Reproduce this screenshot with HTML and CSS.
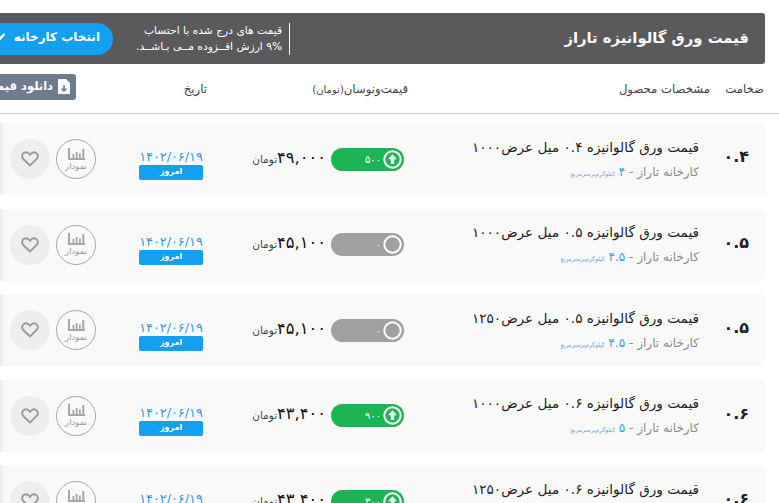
FILE: index.html
```html
<!DOCTYPE html>
<html lang="fa" dir="rtl">
<head>
  <meta charset="UTF-8">
  <title>قیمت ورق گالوانیزه تاراز</title>
  <link rel="stylesheet" href="styles.css">
</head>
<body>
<svg class="sprite">
  <symbol id="i-up" viewBox="0 0 19 19"><circle cx="9.500" cy="9.500" r="8.200" fill="none" stroke="#fff" stroke-width="2"/><path d="M9.500 4.300L14 9.300h-2.800v4.700H7.800V9.300H5z" fill="#fff"/></symbol>
  <symbol id="i-flat" viewBox="0 0 19 19"><circle cx="9.500" cy="9.500" r="8.200" fill="none" stroke="#fff" stroke-width="2"/></symbol>
  <symbol id="i-chart" viewBox="0 0 17 12"><path d="M1 0v11h16" fill="none" stroke="#a8a8a8" stroke-width="2"/><path d="M4.500 6h1.800v4H4.500zM7.800 4h1.800v6H7.800zM11 5.500h1.800V10H11zM14.300 1h2v9h-2z" fill="#a8a8a8"/></symbol>
  <symbol id="i-heart" viewBox="0 0 18 16"><path d="M9 14.500L2.500 8.200C.5 6.200.8 3.300 2.800 2c1.900-1.200 4.400-.6 6.200 1.800C10.800 1.400 13.300.8 15.200 2c2 1.300 2.300 4.200.3 6.200z" fill="none" stroke="#9a9a9a" stroke-width="1.900"/></symbol>
</svg>
<main class="page">
  <header class="top-bar">
    <h1 class="top-title">قیمت ورق گالوانیزه تاراز</h1>
    <div class="top-side">
      <p class="top-note">قیمت های درج شده با احتساب<br>۹% ارزش افــزوده مــی بـاشــد.</p>
      <button class="pick-btn">انتخاب کارخانه
        <svg width="13" height="11" viewBox="0 0 13 11"><path d="M1.500 5.500l3.500 3.500 6.500-7" fill="none" stroke="#fff" stroke-width="2.400"/></svg>
      </button>
    </div>
  </header>

  <div class="table-head">
    <span class="th-thick">ضخامت</span>
    <span class="th-product">مشخصات محصول</span>
    <span class="th-price">قیمت‌ونوسان<small>(تومان)</small></span>
    <span class="th-date">تاریخ</span>
    <button class="dl-btn">
      <svg width="12" height="15" viewBox="0 0 12 15"><path d="M0 0h8l4 4v11H0z" fill="#fff"/><path d="M6 6v6M3.500 9.500L6 12l2.500-2.500" fill="none" stroke="#6f7c8f" stroke-width="1.500"/></svg>
      دانلود قیمت ها
    </button>
  </div>

  <section class="row">
    <div class="c-thick">۰.۴</div>
    <div class="c-product">
      <div class="p-name">قیمت ورق گالوانیزه ۰.۴ میل عرض۱۰۰۰</div>
      <div class="p-sub">کارخانه تاراز - <b>۴</b> <small class="violet">کیلوگرم‌برمترمربع</small></div>
    </div>
    <div class="c-price">
      <div class="pill up"><svg width="19" height="19"><use href="#i-up"/></svg>۵۰۰</div>
      <div class="amount">۴۹,۰۰۰<small>تومان</small></div>
    </div>
    <div class="c-date"><span>۱۴۰۲/۰۶/۱۹</span><em>امروز</em></div>
    <div class="c-actions">
      <div class="chart"><svg width="17" height="12"><use href="#i-chart"/></svg><span>نمودار</span></div>
      <div class="fav"><svg width="18" height="16"><use href="#i-heart"/></svg></div>
    </div>
  </section>

  <section class="row">
    <div class="c-thick">۰.۵</div>
    <div class="c-product">
      <div class="p-name">قیمت ورق گالوانیزه ۰.۵ میل عرض۱۰۰۰</div>
      <div class="p-sub">کارخانه تاراز - <b>۴.۵</b> <small>کیلوگرم‌برمترمربع</small></div>
    </div>
    <div class="c-price">
      <div class="pill flat"><svg width="19" height="19"><use href="#i-flat"/></svg>۰</div>
      <div class="amount">۴۵,۱۰۰<small>تومان</small></div>
    </div>
    <div class="c-date"><span>۱۴۰۲/۰۶/۱۹</span><em>امروز</em></div>
    <div class="c-actions">
      <div class="chart"><svg width="17" height="12"><use href="#i-chart"/></svg><span>نمودار</span></div>
      <div class="fav"><svg width="18" height="16"><use href="#i-heart"/></svg></div>
    </div>
  </section>

  <section class="row">
    <div class="c-thick">۰.۵</div>
    <div class="c-product">
      <div class="p-name">قیمت ورق گالوانیزه ۰.۵ میل عرض۱۲۵۰</div>
      <div class="p-sub">کارخانه تاراز - <b>۴.۵</b> <small>کیلوگرم‌برمترمربع</small></div>
    </div>
    <div class="c-price">
      <div class="pill flat"><svg width="19" height="19"><use href="#i-flat"/></svg>۰</div>
      <div class="amount">۴۵,۱۰۰<small>تومان</small></div>
    </div>
    <div class="c-date"><span>۱۴۰۲/۰۶/۱۹</span><em>امروز</em></div>
    <div class="c-actions">
      <div class="chart"><svg width="17" height="12"><use href="#i-chart"/></svg><span>نمودار</span></div>
      <div class="fav"><svg width="18" height="16"><use href="#i-heart"/></svg></div>
    </div>
  </section>

  <section class="row">
    <div class="c-thick">۰.۶</div>
    <div class="c-product">
      <div class="p-name">قیمت ورق گالوانیزه ۰.۶ میل عرض۱۰۰۰</div>
      <div class="p-sub">کارخانه تاراز - <b>۵</b> <small>کیلوگرم‌برمترمربع</small></div>
    </div>
    <div class="c-price">
      <div class="pill up"><svg width="19" height="19"><use href="#i-up"/></svg>۹۰۰</div>
      <div class="amount">۴۳,۴۰۰<small>تومان</small></div>
    </div>
    <div class="c-date"><span>۱۴۰۲/۰۶/۱۹</span><em>امروز</em></div>
    <div class="c-actions">
      <div class="chart"><svg width="17" height="12"><use href="#i-chart"/></svg><span>نمودار</span></div>
      <div class="fav"><svg width="18" height="16"><use href="#i-heart"/></svg></div>
    </div>
  </section>

  <section class="row">
    <div class="c-thick">۰.۶</div>
    <div class="c-product">
      <div class="p-name">قیمت ورق گالوانیزه ۰.۶ میل عرض۱۲۵۰</div>
      <div class="p-sub">کارخانه تاراز - <b>۵</b> <small>کیلوگرم‌برمترمربع</small></div>
    </div>
    <div class="c-price">
      <div class="pill up"><svg width="19" height="19"><use href="#i-up"/></svg>۳۰۰</div>
      <div class="amount">۴۳,۴۰۰<small>تومان</small></div>
    </div>
    <div class="c-date"><span>۱۴۰۲/۰۶/۱۹</span><em>امروز</em></div>
    <div class="c-actions">
      <div class="chart"><svg width="17" height="12"><use href="#i-chart"/></svg><span>نمودار</span></div>
      <div class="fav"><svg width="18" height="16"><use href="#i-heart"/></svg></div>
    </div>
  </section>
</main>
</body>
</html>
```

FILE: styles.css
```css
html, body {
  margin: 0;
  height: 503px;
  overflow: hidden;
  background: #fff;
}
body {
  font-family: "DejaVu Sans", sans-serif;
  color: #222;
}
.sprite { display: none; }
.page {
  width: 765px;
  margin: 0 14px 0 0;
  padding-top: 13px;
}
button {
  font-family: inherit;
  border: 0;
  color: #fff;
}

.top-bar {
  height: 51px;
  margin-left: -40px;
  padding: 0 16px 0 0;
  background: #5a5a5c;
  border-radius: 3px;
  display: flex;
  align-items: center;
  justify-content: space-between;
  color: #fff;
}
.top-title {
  margin: 0 0 3px;
  font-size: 14.800px;
  font-weight: bold;
}
.top-side {
  display: flex;
  align-items: center;
  gap: 23px;
}
.top-note {
  margin: 0;
  padding-right: 7px;
  border-right: 1px solid #fff;
  font-size: 10.700px;
  line-height: 16px;
}
.pick-btn {
  width: 153px;
  height: 32px;
  border-radius: 16px;
  background: #14a0f0;
  font-size: 12px;
  font-weight: bold;
  display: flex;
  align-items: center;
  gap: 8px;
  padding: 0 13px 3px;
}

.table-head {
  height: 49px;
  margin-left: -14px;
  margin-right: -14px;
  border-bottom: 1px solid #ccc;
  position: relative;
  display: flex;
  align-items: center;
  font-size: 11.700px;
  color: #444;
}
.th-thick { width: 69px; padding-right: 15px; box-sizing: border-box; }
.th-product { width: 302px; }
.th-price { width: 201px; }
.th-price small { font-size: 10px; }
.th-date { width: 90px; }
.dl-btn {
  position: absolute;
  left: -50px;
  top: 10px;
  width: 140px;
  height: 26px;
  padding: 0 6px 2px;
  border-radius: 3px;
  background: #6f7c8f;
  font-size: 11.500px;
  font-weight: bold;
  display: flex;
  align-items: center;
  gap: 5px;
}

.row {
  height: 72px;
  margin-top: 13.500px;
  box-sizing: border-box;
  background: #f9f9f9;
  border-left: 3px solid #eee;
  border-radius: 0 5px 5px 0;
  display: flex;
  align-items: center;
}
.table-head + .row { margin-top: 9px; }

.c-thick {
  width: 66px;
  padding: 0 16px 5px 0;
  box-sizing: border-box;
  font-size: 16px;
  font-weight: bold;
}
.c-product {
  width: 295px;
}
.p-name {
  font-size: 13.600px;
  line-height: 18px;
  white-space: nowrap;
}
.p-sub {
  margin-top: 9px;
  font-size: 12px;
  line-height: 15px;
  color: #8a8a8a;
  white-space: nowrap;
}
.p-sub b {
  font-weight: normal;
  color: #3f9cf0;
}
.p-sub small {
  font-size: 6px;
  color: #5aa5f0;
}
.p-sub small.violet { color: #8a93ea; }

.c-price {
  width: 201px;
  display: flex;
  align-items: center;
  gap: 5px;
}
.pill {
  width: 73px;
  height: 23px;
  box-sizing: border-box;
  padding: 0 2px;
  border-radius: 12px;
  display: flex;
  align-items: center;
  gap: 2px;
  font-size: 10px;
  color: #fff;
}
.pill.up { background: #1cb455; }
.pill.flat { background: #a0a0a0; }
.amount {
  padding-bottom: 4px;
  font-size: 16.300px;
  white-space: nowrap;
  color: #111;
}
.amount small {
  font-size: 10.500px;
  color: #444;
}

.c-date {
  width: 64px;
  padding-top: 10px;
  display: flex;
  flex-direction: column;
  gap: 1px;
  text-align: center;
  font-size: 12.800px;
  color: #2f9bf5;
}
.c-date em {
  height: 15px;
  border-radius: 2px;
  background: #14a0f0;
  color: #fff;
  font-size: 8px;
  font-style: normal;
  font-weight: bold;
  line-height: 14px;
}

.c-actions {
  margin-right: 43px;
  display: flex;
  gap: 6px;
}
.chart, .fav {
  width: 40px;
  height: 40px;
  box-sizing: border-box;
  border-radius: 50%;
  display: flex;
  flex-direction: column;
  align-items: center;
  justify-content: center;
}
.chart {
  border: 1px solid #a8a8a8;
  font-size: 8.500px;
  color: #999;
  gap: 1px;
}
.fav { background: #eee; }
```
